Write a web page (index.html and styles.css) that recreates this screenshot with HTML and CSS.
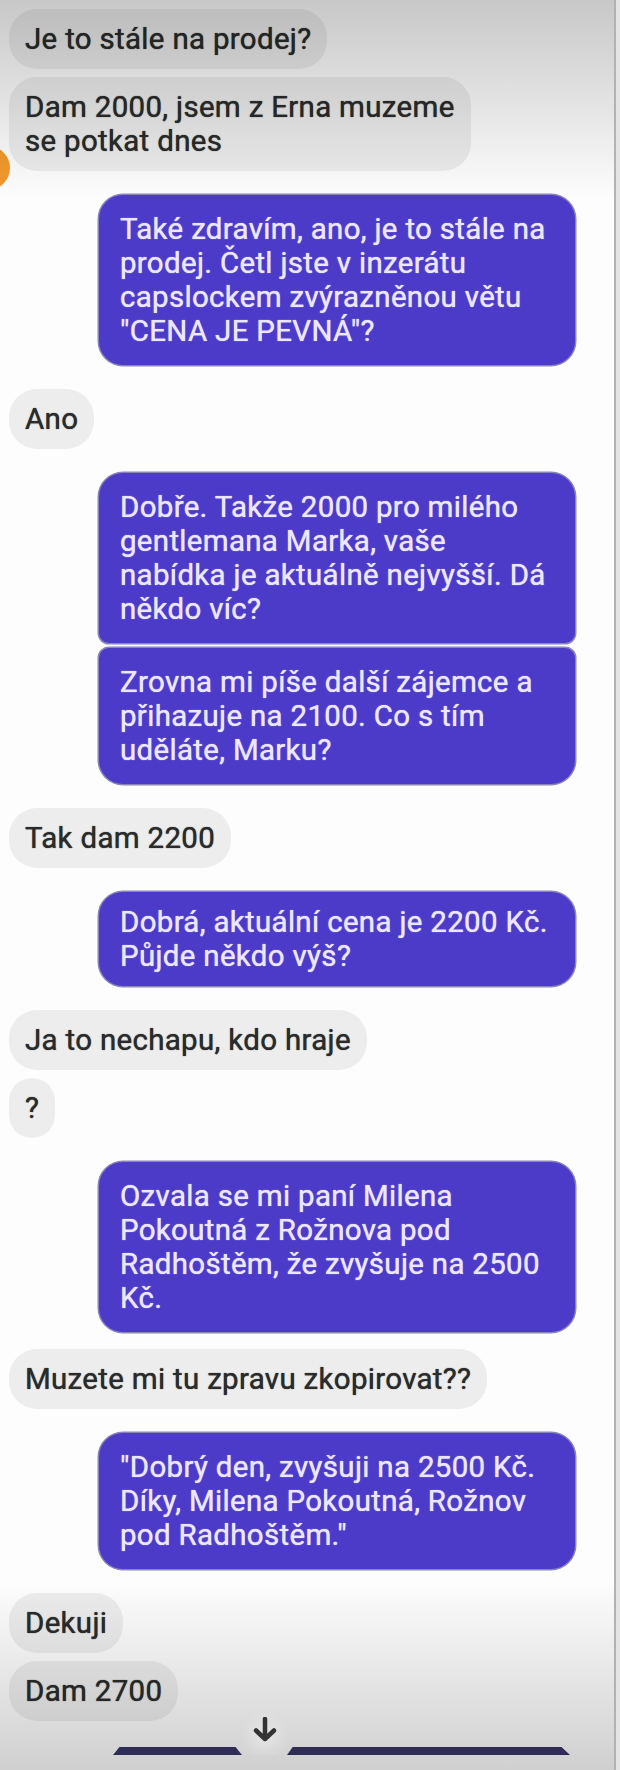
FILE: index.html
```html
<!DOCTYPE html>
<html lang="cs">
<head>
<meta charset="utf-8">
<title>Chat</title>
<link rel="stylesheet" href="styles.css">
</head>
<body>
<div class="screen">
  <div class="chat">
    <div class="msg in">Je to stále na prodej?</div>
    <div class="msg in">Dam 2000, jsem z Erna muzeme<br>se potkat dnes</div>
    <div class="msg out">Také zdravím, ano, je to stále na prodej. Četl jste v inzerátu capslockem zvýrazněnou větu "CENA JE PEVNÁ"?</div>
    <div class="msg in">Ano</div>
    <div class="msg out first">Dobře. Takže 2000 pro milého gentlemana Marka, vaše nabídka je aktuálně nejvyšší. Dá někdo víc?</div>
    <div class="msg out last">Zrovna mi píše další zájemce a přihazuje na 2100. Co s tím uděláte, Marku?</div>
    <div class="msg in">Tak dam 2200</div>
    <div class="msg out tight">Dobrá, aktuální cena je 2200 Kč. Půjde někdo výš?</div>
    <div class="msg in">Ja to nechapu, kdo hraje</div>
    <div class="msg in">?</div>
    <div class="msg out">Ozvala se mi paní Milena Pokoutná z Rožnova pod Radhoštěm, že zvyšuje na 2500 Kč.</div>
    <div class="msg in near">Muzete mi tu zpravu zkopirovat??</div>
    <div class="msg out">"Dobrý den, zvyšuji na 2500 Kč. Díky, Milena Pokoutná, Rožnov pod Radhoštěm."</div>
    <div class="msg in">Dekuji</div>
    <div class="msg in">Dam 2700</div>
  </div>
  <div class="avatar"></div>
  <div class="shade-top"></div>
  <div class="shade-bottom"></div>
  <div class="footer">
    <div class="bar bar-left"></div>
    <div class="scroll-down">
      <svg width="26" height="26" viewBox="0 0 26 26" aria-hidden="true">
        <path d="M13 2 V22 M4 13.5 L13 22 L22 13.5" fill="none" stroke="#333333" stroke-width="4.5" stroke-linecap="round" stroke-linejoin="round"/>
      </svg>
    </div>
    <div class="bar bar-right"></div>
  </div>
</div>
</body>
</html>
```

FILE: styles.css
```css
html, body {
  margin: 0;
  padding: 0;
}

body {
  width: 620px;
  height: 1770px;
  overflow: hidden;
  background: #e4e4e4;
  font-family: Roboto, "Liberation Sans", sans-serif;
}

.screen {
  position: relative;
  width: 614px;
  height: 1770px;
  background: #fdfdfd;
  border-right: 2px solid #b2b2b2;
  overflow: hidden;
}

.chat {
  display: flex;
  flex-direction: column;
  padding: 9px 0 0 9px;
}

.msg {
  font-size: 29.5px;
  line-height: 34px;
  letter-spacing: 0.3px;
  text-shadow: 0 0 1px currentColor;
}

.in {
  align-self: flex-start;
  background: #ededed;
  color: #2b2b2b;
  padding: 13px 16px;
  border-radius: 28px;
}

.out {
  align-self: flex-start;
  margin-left: 90px;
  width: 476px;
  box-sizing: border-box;
  background: #4c3bc8;
  color: #ebe7ff;
  padding: 17px 18px 17px 21px;
  border-radius: 24px;
  box-shadow: 0 0 0 1.5px rgba(45, 32, 130, 0.55);
}

.out.tight {
  padding-top: 13px;
  padding-bottom: 13px;
}

.out.first {
  border-bottom-left-radius: 10px;
  border-bottom-right-radius: 10px;
}

.out.last {
  border-top-left-radius: 10px;
  border-top-right-radius: 10px;
}

.in + .in {
  margin-top: 8px;
}

.out + .out {
  margin-top: 5px;
}

.in + .out,
.out + .in {
  margin-top: 24px;
}

.out + .in.near {
  margin-top: 17px;
}

.avatar {
  position: absolute;
  left: -34px;
  top: 146px;
  width: 44px;
  height: 44px;
  border-radius: 50%;
  background: #f39a2c;
}

.shade-top {
  position: absolute;
  left: 0;
  top: 0;
  width: 100%;
  height: 200px;
  background: linear-gradient(to bottom, rgba(0, 0, 0, 0.21), rgba(0, 0, 0, 0));
  pointer-events: none;
}

.shade-bottom {
  position: absolute;
  left: 0;
  bottom: 0;
  width: 100%;
  height: 190px;
  background: linear-gradient(to top, rgba(0, 0, 0, 0.18), rgba(0, 0, 0, 0));
  pointer-events: none;
}

.footer {
  position: absolute;
  left: 0;
  bottom: 15px;
  width: 100%;
  height: 46px;
  display: flex;
  align-items: flex-end;
}

.bar {
  height: 8px;
  background: #2f2d55;
}

.bar-left {
  margin-left: 113px;
  width: 129px;
  clip-path: polygon(5% 0, 95% 0, 100% 100%, 0 100%);
}

.bar-right {
  width: 283px;
  clip-path: polygon(2% 0, 97% 0, 100% 100%, 0 100%);
}

.scroll-down {
  width: 45px;
  height: 46px;
  display: flex;
  justify-content: center;
  align-items: flex-start;
  padding-top: 8px;
  box-sizing: border-box;
  border-radius: 50% 50% 0 0;
  background: radial-gradient(circle at 50% 60%, rgba(255, 255, 255, 0.35), rgba(255, 255, 255, 0) 70%);
}
```
